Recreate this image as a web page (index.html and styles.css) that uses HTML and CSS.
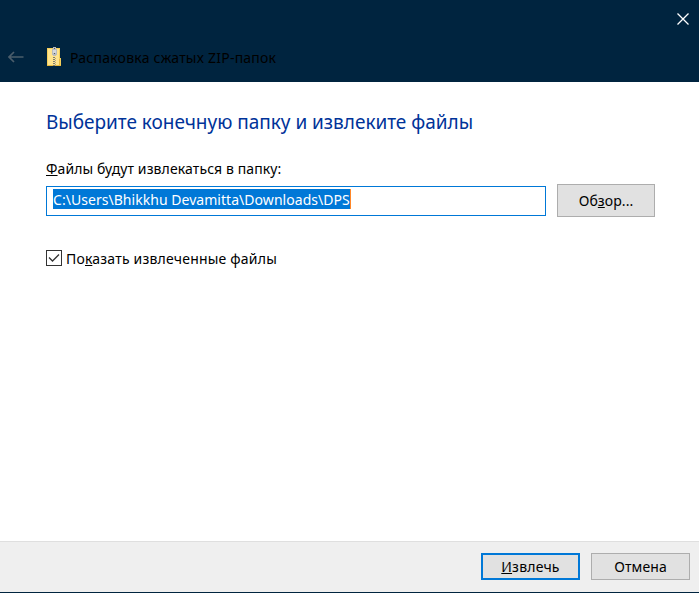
FILE: index.html
```html
<!DOCTYPE html>
<html lang="ru">
<head>
<meta charset="utf-8">
<title>Распаковка сжатых ZIP-папок</title>
<link rel="stylesheet" href="styles.css">
</head>
<body>
<div class="window">
  <header class="titlebar">
    <div class="controls">
      <svg class="close" width="12" height="12" viewBox="0 0 12 12"><path d="M.5.5l11 11M11.5.5l-11 11"/></svg>
    </div>
    <div class="caption">
      <svg class="back" width="16" height="12" viewBox="0 0 16 12"><path d="M15.500 6H1M6 1L1 6l5 5"/></svg>
      <svg class="zip" width="15" height="20" viewBox="0 0 15 20" shape-rendering="crispEdges">
        <path fill="#f4ce5c" d="M0 1h13v10h1v8H0z"/>
        <path fill="#ffe48c" d="M1 2h11v16H1z"/>
        <path fill="#e6b93e" d="M0 18h14v1H0zM12 12h1v6h-1z"/>
        <path fill="#b9bcc0" d="M5 2h5v6H5zM6 0h3v9H6z"/>
        <path fill="#d5d8dc" d="M6 3h3v3H6z"/>
        <path fill="#55585c" d="M7 1h1v1H7zM7 6h1v1H7z"/>
        <path stroke="#7f7b70" stroke-width="2" stroke-dasharray="1 1" d="M7 10v9"/>
        <path stroke="#a7a294" stroke-width="1" stroke-dasharray="1 1" d="M8.500 11v8"/>
      </svg>
      <span class="title">Распаковка сжатых ZIP-папок</span>
    </div>
  </header>
  <main class="content">
    <h1 class="heading">Выберите конечную папку и извлеките файлы</h1>
    <div class="label"><u>Ф</u>айлы будут извлекаться в папку:</div>
    <div class="row">
      <div class="field"><span class="selection">C:\Users\Bhikkhu Devamitta\Downloads\DPS</span></div>
      <button class="btn browse">Об<u>з</u>ор...</button>
    </div>
    <div class="check">
      <span class="box"><svg width="14" height="14" viewBox="0 0 14 14"><path d="M2 6.500L5.500 10 12 3.500"/></svg></span>
      <span class="check-text">По<u>к</u>азать извлеченные файлы</span>
    </div>
  </main>
  <footer class="footer">
    <button class="btn primary"><u>И</u>звлечь</button>
    <button class="btn cancel">Отмена</button>
  </footer>
</div>
</body>
</html>
```
FILE: styles.css
```css
* { box-sizing: border-box; }
body { margin: 0; font: 14px/20px "Noto Sans", "Open Sans", sans-serif; color: #000; }
.window { width: 699px; height: 593px; display: flex; flex-direction: column; background: #fff; border-bottom: 1px solid #00243f; overflow: hidden; }
.titlebar { height: 82px; background: #00243f; flex: none; }
.controls { height: 37px; display: flex; justify-content: flex-end; padding: 13px 10px 0 0; }
.close { fill: none; stroke: #fff; stroke-width: 1.3; }
.caption { display: flex; align-items: center; height: 40px; padding-left: 8px; }
.back { fill: none; stroke: #4a5d6b; stroke-width: 1.7; }
.zip { margin-left: 23px; }
.title { margin: 2px 0 0 8px; white-space: nowrap; letter-spacing: .23px; }
.content { flex: 1; padding: 26px 44px 0 46px; }
.heading { margin: 0; font-size: 19px; line-height: 28px; font-weight: 400; color: #003399; white-space: nowrap; letter-spacing: -.02px; }
.label { margin-top: 23px; height: 22px; white-space: nowrap; letter-spacing: .11px; }
u { text-decoration: underline 1px; text-underline-offset: 1px; text-decoration-skip-ink: none; }
.row { display: flex; gap: 11px; margin-top: 3px; }
.field { width: 500px; height: 30px; margin-top: 2px; border: 1px solid #0078d7; padding: 2px 6px; }
.selection { display: block; width: 298px; height: 20px; line-height: 21px; background: #0078d7; color: #fff; white-space: nowrap; letter-spacing: .04px; border-right: 1px solid #ff8728; }
.btn { font: inherit; padding: 0; border: 1px solid #adadad; background: #e1e1e1; color: #000; white-space: nowrap; letter-spacing: .1px; }
.browse { width: 98px; height: 33px; }
.check { display: flex; align-items: center; margin-top: 31px; height: 20px; gap: 4px; white-space: nowrap; letter-spacing: .2px; }
.check-text { padding-top: 2px; }
.box { width: 16px; height: 16px; border: 1px solid #333; display: flex; }
.box svg { fill: none; stroke: #333; stroke-width: 1.3; }
.footer { height: 51px; background: #efefef; border-top: 1px solid #dfdfdf; display: flex; justify-content: flex-end; gap: 11px; padding: 11px 9px 0 0; }
.primary { width: 99px; height: 27px; border: 2px solid #0078d7; letter-spacing: .2px; }
.cancel { width: 99px; height: 27px; }
```
